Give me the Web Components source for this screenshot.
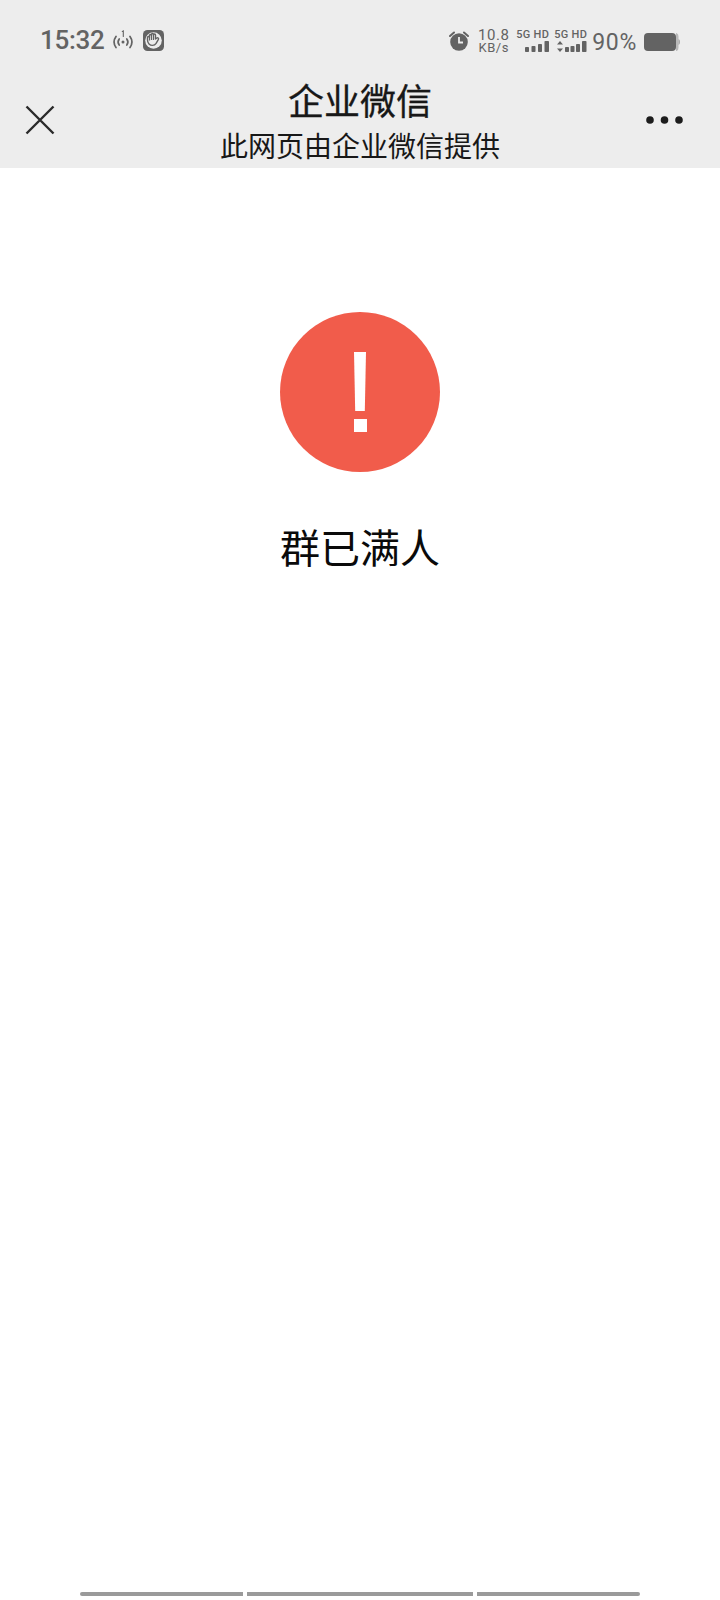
<!DOCTYPE html>
<html lang="zh-CN">
<head>
<meta charset="utf-8">
<title>企业微信</title>
<style>
  html, body {
    margin: 0;
    height: 1600px;
    background: #fff;
    font-family: Roboto, "Noto Sans CJK SC", sans-serif;
  }
  body {
    display: flex;
    flex-direction: column;
    overflow: hidden;
  }
</style>
</head>
<body>
<status-bar></status-bar>
<nav-bar>
  <span slot="title">企业微信</span>
  <span slot="sub">此网页由企业微信提供</span>
</nav-bar>
<result-msg>群已满人</result-msg>
<gesture-bar></gesture-bar>

<script>
// phone status bar, all grey on the nav colour
class StatusBar extends HTMLElement {
  constructor() {
    super();
    this.attachShadow({ mode: "open" });
    this.shadowRoot.innerHTML = `
    <style>
      :host {
        display: flex;
        align-items: center;
        justify-content: space-between;
        height: 80px;
        box-sizing: border-box;
        padding: 0 40px 0 40px;
        background: #ededed;
        color: #636363;
        font-family: Roboto, sans-serif;
      }
      .left, .right { display: flex; align-items: center; }
      .time {
        font-size: 26px;
        font-weight: 500;
        letter-spacing: -0.3px;
        line-height: 30px;
        margin-right: 9px;
      }
      .cast { margin-right: 10px; }
      svg { display: block; }
      .alarm { margin-top: 2px; }
      .speed {
        display: flex;
        flex-direction: column;
        align-items: center;
        margin: 2px 8px 0 9px;
        width: 31px;
      }
      .speed b { font: 400 15px/13px Roboto, sans-serif; letter-spacing: .5px; }
      .speed i { font: 400 13px/12px Roboto, sans-serif; font-style: normal; letter-spacing: .5px; }
      .sim {
        display: flex;
        flex-direction: column;
        align-items: flex-end;
        gap: 1px;
        width: 32px;
        margin-right: 6px;
      }
      .sim b { font: 500 11px/11px Roboto, sans-serif; letter-spacing: .3px; white-space: nowrap; }
      .pct {
        font-size: 23px;
        line-height: 28px;
        letter-spacing: .7px;
        margin: 6px 7px 0 -1px;
      }
      .batt { margin-top: 4px; }
    </style>
    <div class="left">
      <span class="time">15:32</span>
      <svg class="cast" width="20" height="20" viewBox="0 0 20 20" fill="none" stroke="currentColor" stroke-width="1.7" stroke-linecap="round">
        <path d="M3 6.500a9.500 9.500 0 0 0 0 11"/>
        <path d="M6.200 9a5 5 0 0 0 0 6"/>
        <path d="M17 6.500a9.500 9.500 0 0 1 0 11"/>
        <path d="M13.800 9a5 5 0 0 1 0 6"/>
        <circle cx="10" cy="12" r="1.500" fill="currentColor" stroke="none"/>
        <path d="M9.300 1.500 10.300 1v5.500" stroke-width="1.100"/>
      </svg>
      <svg width="21" height="21" viewBox="0 0 21 21">
        <rect width="21" height="21" rx="4.500" fill="currentColor"/>
        <circle cx="10.500" cy="10.500" r="8.300" fill="#ededed"/>
        <path d="M4.500 10V7.500a1 1 0 0 1 2 0V5.500a1 1 0 0 1 2 0V4.500a1 1 0 0 1 2 0V5a1 1 0 0 1 2 0v4l1.300-1c1-.7 2.200.3 1.600 1.400l-2.300 4c-.8 1.300-2 2-3.600 2-2.600 0-5-2-5-5.400z" fill="#ededed" stroke="currentColor" stroke-width="1.400" stroke-linejoin="round"/>
        <path d="M6.500 7.500V10.500M8.500 5.500V10M10.500 5V10" stroke="currentColor" stroke-width="1.200" fill="none"/>
      </svg>
    </div>
    <div class="right">
      <svg class="alarm" width="20" height="20" viewBox="0 0 20 20">
        <path d="M1 5 5 1.500M19 5l-4-3.500" stroke="currentColor" stroke-width="2" stroke-linecap="round"/>
        <circle cx="10" cy="11" r="8.800" fill="currentColor"/>
        <path d="M10 6v5.500h4" fill="none" stroke="#ededed" stroke-width="1.800"/>
      </svg>
      <div class="speed"><b>10.8</b><i>KB/s</i></div>
      <div class="sim">
        <b>5G HD</b>
        <svg width="24" height="11" viewBox="0 0 24 11" fill="currentColor">
          <rect x="0" y="6" width="4" height="5" rx=".8"/>
          <rect x="6.500" y="5" width="4" height="6" rx=".8"/>
          <rect x="13" y="3" width="4" height="8" rx=".8"/>
          <rect x="19.500" y="0" width="4.500" height="11" rx=".8"/>
        </svg>
      </div>
      <div class="sim">
        <b>5G HD</b>
        <svg width="30" height="11" viewBox="0 0 30 11" fill="currentColor">
          <path d="M3 0 6 3.500H0zM3 11 0 7.500H6z"/>
          <rect x="8" y="6" width="4" height="5" rx=".8"/>
          <rect x="13.500" y="5" width="4" height="6" rx=".8"/>
          <rect x="19" y="3" width="4" height="8" rx=".8"/>
          <rect x="25" y="0" width="4.500" height="11" rx=".8"/>
        </svg>
      </div>
      <span class="pct">90%</span>
      <svg class="batt" width="36" height="18" viewBox="0 0 36 18">
        <rect width="32" height="18" rx="4" fill="currentColor"/>
        <path d="M32 0h.5a3.500 3.500 0 0 1 2 3.500v11a3.500 3.500 0 0 1-2 3.500H32z" fill="#b9b9b9"/>
        <path d="M34.500 6q1.500.5 1.500 3t-1.500 3z" fill="#a5a5a5"/>
      </svg>
    </div>`;
  }
}

class NavBar extends HTMLElement {
  constructor() {
    super();
    this.attachShadow({ mode: "open" });
    this.shadowRoot.innerHTML = `
    <style>
      :host {
        display: grid;
        grid-template-columns: 100px 1fr 100px;
        align-items: start;
        height: 88px;
        background: #ededed;
        color: #181818;
        font-family: "Noto Sans CJK SC", sans-serif;
      }
      .close { justify-self: start; margin: 25px 0 0 25px; display: block; }
      .more { justify-self: end; margin: 36px 37px 0 0; display: block; }
      .mid {
        display: flex;
        flex-direction: column;
        align-items: center;
      }
      .title { font-size: 36px; line-height: 38px; -webkit-text-stroke: .3px #181818; }
      .sub { font-size: 28px; line-height: 44px; margin-top: 5px; }
    </style>
    <svg class="close" width="30" height="30" viewBox="0 0 30 30" fill="none" stroke="#2a2a2a" stroke-width="2.400">
      <path d="M1.500 1.500 28.500 28.500M28.500 1.500 1.500 28.500"/>
    </svg>
    <div class="mid">
      <div class="title"><slot name="title"></slot></div>
      <div class="sub"><slot name="sub"></slot></div>
    </div>
    <svg class="more" width="37" height="8" viewBox="0 0 37 8" fill="#1c1c1c">
      <circle cx="4" cy="4" r="3.800"/><circle cx="18.500" cy="4" r="3.800"/><circle cx="33" cy="4" r="3.800"/>
    </svg>`;
  }
}

class ResultMsg extends HTMLElement {
  constructor() {
    super();
    this.attachShadow({ mode: "open" });
    this.shadowRoot.innerHTML = `
    <style>
      :host {
        display: flex;
        flex: 1;
        flex-direction: column;
        align-items: center;
        padding-top: 144px;
        background: #fff;
        color: #0a0a0a;
        font-family: "Noto Sans CJK SC", sans-serif;
      }
      .circle {
        width: 160px;
        height: 160px;
        border-radius: 50%;
        background: #f15c4b;
        display: flex;
        flex-direction: column;
        align-items: center;
        padding-top: 40px;
        box-sizing: border-box;
        gap: 8px;
      }
      .bar {
        width: 12px;
        height: 59px;
        background: #fff;
        clip-path: polygon(0 0, 100% 0, 90% 100%, 10% 100%);
      }
      .dot { width: 13px; height: 13px; background: #fff; }
      .text { font-size: 40px; line-height: 58px; margin-top: 45px; }
    </style>
    <div class="circle"><div class="bar"></div><div class="dot"></div></div>
    <div class="text"><slot></slot></div>`;
  }
}

class GestureBar extends HTMLElement {
  constructor() {
    super();
    this.attachShadow({ mode: "open" });
    this.shadowRoot.innerHTML = `
    <style>
      :host {
        display: flex;
        gap: 4px;
        padding: 0 80px 4px;
        background: #fff;
      }
      div { height: 4px; background: #9a9a9a; }
      .a { width: 163px; border-radius: 2px 0 0 2px; }
      .b { flex: 1; }
      .c { width: 163px; border-radius: 0 2px 2px 0; }
    </style>
    <div class="a"></div><div class="b"></div><div class="c"></div>`;
  }
}

customElements.define("status-bar", StatusBar);
customElements.define("nav-bar", NavBar);
customElements.define("result-msg", ResultMsg);
customElements.define("gesture-bar", GestureBar);
</script>
</body>
</html>
